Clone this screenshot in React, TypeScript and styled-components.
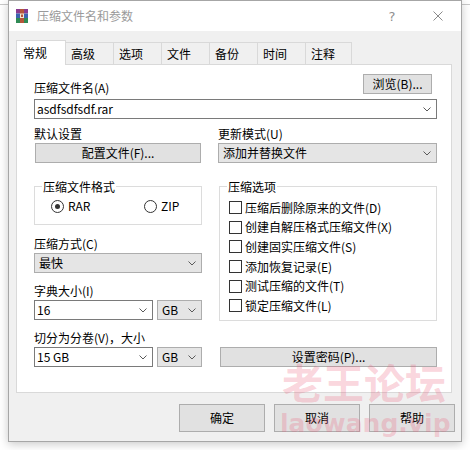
import React from "react";
import styled, { createGlobalStyle } from "styled-components";

const GlobalStyle = createGlobalStyle`
  * { box-sizing: border-box; }
  html, body { margin: 0; padding: 0; }
  body {
    background: #fff;
    font-family: "Noto Sans CJK SC", "Noto Sans", sans-serif;
    font-size: 12px;
    color: #000;
  }
`;

const Chevron = () => (
  <svg width="8" height="5" viewBox="0 0 8 5">
    <polyline points="0.5,0.5 4,4 7.5,0.5" fill="none" stroke="#5a5a5a" strokeWidth="1" />
  </svg>
);

const RarIcon = () => (
  <svg width="12" height="14" viewBox="0 0 12 14">
    <rect x="0" y="0" width="12" height="4.5" fill="#8a3a8e" />
    <rect x="0" y="4.5" width="12" height="4.5" fill="#3c63b0" />
    <rect x="0" y="9" width="12" height="5" fill="#2f8a55" />
    <rect x="4" y="0" width="4" height="14" fill="#b5553a" />
    <rect x="4.5" y="5" width="3" height="3.5" fill="none" stroke="#f3e6d0" strokeWidth="1" />
  </svg>
);

const CloseGlyph = () => (
  <svg width="10" height="10" viewBox="0 0 10 10">
    <path d="M0.5 0.5 L9.5 9.5 M9.5 0.5 L0.5 9.5" stroke="#8a8a8a" strokeWidth="1" />
  </svg>
);

const tabs = ["常规", "高级", "选项", "文件", "备份", "时间", "注释"];
const tabWidths = [50, 49, 49, 49, 49, 49, 47];

const options = [
  "压缩后删除原来的文件(D)",
  "创建自解压格式压缩文件(X)",
  "创建固实压缩文件(S)",
  "添加恢复记录(E)",
  "测试压缩的文件(T)",
  "锁定压缩文件(L)",
];

export default function App() {
  return (
    <Screen>
      <GlobalStyle />
      <Window>
        <TitleBar>
          <RarIcon />
          <Title>压缩文件名和参数</Title>
          <CaptionButton>?</CaptionButton>
          <CaptionButton>
            <CloseGlyph />
          </CaptionButton>
        </TitleBar>

        <Body>
          <TabStrip>
            {tabs.map((t, i) => (
              <Tab key={t} $active={i === 0} $w={tabWidths[i]} $first={i === 0}>
                {t}
              </Tab>
            ))}
          </TabStrip>

          <Panel>
            <TopRow>
              <Label>压缩文件名(A)</Label>
              <Button $w={69} $mr={5} $mb={1}>
                浏览(B)...
              </Button>
            </TopRow>
            <Combo $edit $mt={4}>
              <ComboText>asdfsdfsdf.rar</ComboText>
              <Chevron />
            </Combo>

            <Columns>
              <Column>
                <Field>
                  <Label>默认设置</Label>
                  <Button $w={166} $ml={1}>
                    配置文件(F)...
                  </Button>
                </Field>

                <Group $mt={23} $h={39}>
                  <GroupCaption>压缩文件格式</GroupCaption>
                  <RadioRow>
                    <RadioItem>
                      <Radio $checked />
                      RAR
                    </RadioItem>
                    <RadioItem>
                      <Radio />
                      ZIP
                    </RadioItem>
                  </RadioRow>
                </Group>

                <Field $mt={12}>
                  <Label>压缩方式(C)</Label>
                  <Combo>
                    <ComboText>最快</ComboText>
                    <Chevron />
                  </Combo>
                </Field>

                <Field $mt={11}>
                  <Label>字典大小(I)</Label>
                  <ComboPair>
                    <Combo $edit $w={119}>
                      <ComboText>16</ComboText>
                      <Chevron />
                    </Combo>
                    <Combo $w={45}>
                      <ComboText>GB</ComboText>
                      <Chevron />
                    </Combo>
                  </ComboPair>
                </Field>

                <Field $mt={11}>
                  <Label>切分为分卷(V)，大小</Label>
                  <ComboPair>
                    <Combo $edit $w={119}>
                      <ComboText>15 GB</ComboText>
                      <Chevron />
                    </Combo>
                    <Combo $w={45}>
                      <ComboText>GB</ComboText>
                      <Chevron />
                    </Combo>
                  </ComboPair>
                </Field>
              </Column>

              <Column>
                <Field>
                  <Label>更新模式(U)</Label>
                  <Combo>
                    <ComboText>添加并替换文件</ComboText>
                    <Chevron />
                  </Combo>
                </Field>

                <Group $mt={23} $h={135} $ml={1}>
                  <GroupCaption>压缩选项</GroupCaption>
                  <CheckList>
                    {options.map((o) => (
                      <CheckRow key={o}>
                        <CheckBox />
                        {o}
                      </CheckRow>
                    ))}
                  </CheckList>
                </Group>

                <Button $w={217} $ml={2} $mt={26}>
                  设置密码(P)...
                </Button>
              </Column>
            </Columns>
          </Panel>

          <Footer>
            <DialogButton>确定</DialogButton>
            <DialogButton>取消</DialogButton>
            <DialogButton>帮助</DialogButton>
          </Footer>
        </Body>

        <Watermark>
          <WatermarkTitle>老王论坛</WatermarkTitle>
          <WatermarkUrl>laowang.vip</WatermarkUrl>
        </Watermark>
      </Window>
    </Screen>
  );
}

const Screen = styled.div`
  width: 470px;
  height: 450px;
  padding-left: 8px;
  overflow: hidden;
  background: linear-gradient(#c9c9c9, #c9c9c9) 0 4px / 100% 1px no-repeat, #fff;
`;

const Window = styled.div`
  position: relative;
  width: 454px;
  height: 442px;
  border: 1px solid #a6a6a6;
  background: #f0f0f0;
  box-shadow: 0 2px 9px rgba(0, 0, 0, 0.22);
  display: flex;
  flex-direction: column;
`;

const TitleBar = styled.div`
  height: 30px;
  flex: none;
  background: #fff;
  display: flex;
  align-items: center;
  padding-left: 7px;
`;

const Title = styled.span`
  flex: 1;
  margin-left: 9px;
  color: #9a9a9a;
  line-height: 14px;
`;

const CaptionButton = styled.div`
  width: 46px;
  height: 30px;
  display: flex;
  align-items: center;
  justify-content: center;
  color: #8f8f8f;
  font-family: "DejaVu Sans", sans-serif;
  font-size: 13px;
`;

const Body = styled.div`
  flex: 1;
  padding: 9px 9px 0 7px;
  display: flex;
  flex-direction: column;
`;

const TabStrip = styled.div`
  position: relative;
  z-index: 1;
  height: 24px;
  display: flex;
  align-items: flex-end;
`;

const Tab = styled.div<{ $active?: boolean; $w: number; $first?: boolean }>`
  position: relative;
  z-index: ${(p) => (p.$active ? 2 : 1)};
  width: ${(p) => p.$w}px;
  height: ${(p) => (p.$active ? 25 : 22)}px;
  margin-left: ${(p) => (p.$first ? 0 : -1)}px;
  margin-bottom: ${(p) => (p.$active ? -1 : 0)}px;
  padding: ${(p) => (p.$active ? "4px 0 0 6px" : "3px 0 0 5px")};
  line-height: 16px;
  background: ${(p) => (p.$active ? "#fff" : "#f0f0f0")};
  border: 1px solid #d9d9d9;
  border-bottom: none;
`;

const Panel = styled.div`
  height: 329px;
  flex: none;
  background: #fff;
  border: 1px solid #d9d9d9;
  padding: 9px 14px 0 17px;
`;

const TopRow = styled.div`
  display: flex;
  align-items: flex-end;
  justify-content: space-between;
`;

const Label = styled.div`
  height: 14px;
  line-height: 14px;
  white-space: nowrap;
`;

const Button = styled.button<{ $w: number; $ml?: number; $mr?: number; $mt?: number; $mb?: number }>`
  width: ${(p) => p.$w}px;
  height: 20px;
  margin: ${(p) => `${p.$mt ?? 0}px ${p.$mr ?? 0}px ${p.$mb ?? 0}px ${p.$ml ?? 0}px`};
  padding: 0;
  background: #e1e1e1;
  border: 1px solid #adadad;
  font: inherit;
  line-height: 14px;
  color: #000;
  display: flex;
  align-items: center;
  justify-content: center;
`;

const Combo = styled.div<{ $edit?: boolean; $w?: number; $mt?: number }>`
  width: ${(p) => (p.$w ? `${p.$w}px` : "100%")};
  height: 20px;
  margin-top: ${(p) => p.$mt ?? 0}px;
  display: flex;
  align-items: center;
  padding: ${(p) => (p.$edit ? "0 5px 0 2px" : "0 5px 0 4px")};
  background: ${(p) => (p.$edit ? "#fff" : "#e5e5e5")};
  border: 1px solid ${(p) => (p.$edit ? "#7a7a7a" : "#adadad")};
`;

const ComboText = styled.span`
  flex: 1;
  line-height: 14px;
  white-space: nowrap;
`;

const ComboPair = styled.div`
  display: flex;
  gap: 4px;
`;

const Columns = styled.div`
  margin-top: 8px;
  display: grid;
  grid-template-columns: 168px 219px;
  column-gap: 16px;
`;

const Column = styled.div`
  display: flex;
  flex-direction: column;
  align-items: flex-start;
  & > * {
    align-self: stretch;
  }
  & > button {
    align-self: flex-start;
  }
`;

const Field = styled.div<{ $mt?: number }>`
  display: flex;
  flex-direction: column;
  gap: 2px;
  margin-top: ${(p) => p.$mt ?? 0}px;
  & > button {
    align-self: flex-start;
  }
`;

const Group = styled.div<{ $mt: number; $h: number; $ml?: number }>`
  position: relative;
  height: ${(p) => p.$h}px;
  margin-top: ${(p) => p.$mt}px;
  margin-left: ${(p) => p.$ml ?? 0}px;
  border: 1px solid #dcdcdc;
`;

const GroupCaption = styled.span`
  position: absolute;
  top: -7px;
  left: 7px;
  padding: 0 1px;
  line-height: 14px;
  background: #fff;
`;

const RadioRow = styled.div`
  display: grid;
  grid-template-columns: 93px auto;
  padding: 12px 0 0 16px;
  line-height: 14px;
`;

const RadioItem = styled.div`
  display: flex;
  align-items: center;
  gap: 4px;
`;

const Radio = styled.span<{ $checked?: boolean }>`
  width: 13px;
  height: 13px;
  border-radius: 50%;
  border: 1px solid #333;
  background: #fff;
  display: flex;
  align-items: center;
  justify-content: center;
  &::after {
    content: "";
    width: 5px;
    height: 5px;
    border-radius: 50%;
    background: ${(p) => (p.$checked ? "#333" : "transparent")};
  }
`;

const CheckList = styled.div`
  padding: 11px 0 0 9px;
  display: flex;
  flex-direction: column;
`;

const CheckRow = styled.div`
  height: 19.6px;
  display: flex;
  align-items: center;
  gap: 3px;
  line-height: 14px;
  white-space: nowrap;
`;

const CheckBox = styled.span`
  width: 13px;
  height: 13px;
  border: 1px solid #333;
  background: #fff;
  flex: none;
`;

const Footer = styled.div`
  margin: 11px -3px 0 0;
  display: flex;
  justify-content: flex-end;
  gap: 9px;
`;

const DialogButton = styled.button`
  width: 86px;
  height: 28px;
  padding: 0;
  background: #e1e1e1;
  border: 1px solid #adadad;
  font: inherit;
  color: #000;
  line-height: 14px;
`;

const Watermark = styled.div`
  position: absolute;
  left: 271px;
  top: 360px;
  display: flex;
  flex-direction: column;
  pointer-events: none;
  color: rgba(236, 96, 124, 0.27);
  font-weight: bold;
`;

const WatermarkTitle = styled.span`
  margin-left: 2px;
  font-family: "Noto Sans CJK SC", sans-serif;
  font-size: 41px;
  line-height: 41px;
  white-space: nowrap;
`;

const WatermarkUrl = styled.span`
  margin-top: 9px;
  font-family: "DejaVu Sans", sans-serif;
  font-size: 25px;
  line-height: 25px;
  white-space: nowrap;
`;
